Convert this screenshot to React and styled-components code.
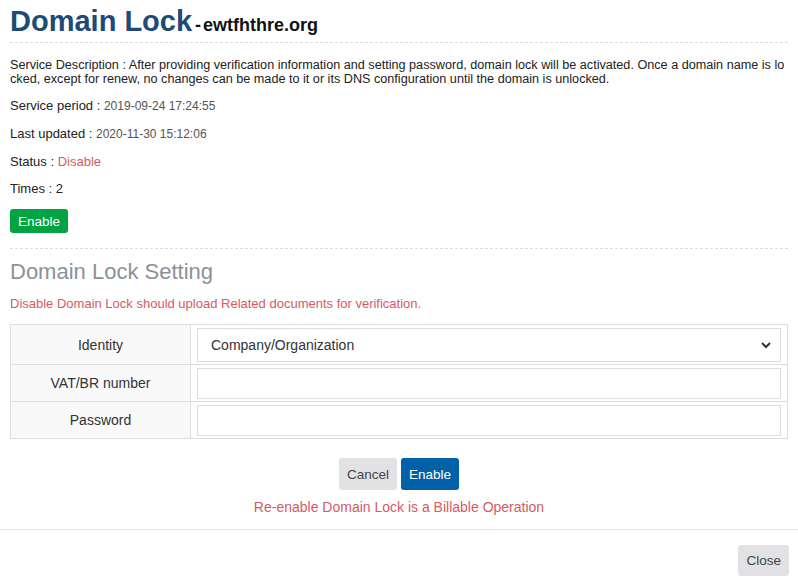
import React from 'react'
import styled, {createGlobalStyle} from 'styled-components'

const GlobalStyle = createGlobalStyle`
    html, body {
        margin: 0;
        padding: 0;
        background: #fff;
        font-family: "Liberation Sans", Arial, sans-serif;
        color: #222;
    }
`

const Modal = styled.div`
    width: 798px;
`
const Body = styled.div`
    padding: 4px 10px 0 10px;
`
const TitleRow = styled.div`
    display: flex;
    align-items: baseline;
    padding-bottom: 4px;
    border-bottom: 1px dashed #ddd;
`
const Title = styled.h1`
    margin: 0;
    font-size: 29px;
    font-weight: bold;
    color: #1b4b76;
    line-height: 34px;
`
const Domain = styled.span`
    font-size: 18px;
    font-weight: bold;
    color: #111;
    margin-left: 3px;
`
const Dash = styled.span`
    margin-right: 2px;
`
const Desc = styled.p`
    margin: 15px 0 0 0;
    font-size: 12.65px;
    line-height: 14px;
    word-break: break-all;
    color: #222;
`
const InfoLine = styled.p`
    margin: 12px 0 0 0;
    font-size: 13px;
    line-height: 15px;
    color: #222;
`
const Value = styled.span`
    color: ${p => p.red ? '#d65a62' : '#555'};
    font-size: ${p => p.red ? '13px' : '12px'};
`
const Button = styled.button`
    font-family: "Liberation Sans", Arial, sans-serif;
    font-size: 13.5px;
    border: none;
    border-radius: 3px;
    padding: 0 8px;
    height: ${p => p.h || 24}px;
    cursor: pointer;
    color: ${p => p.variant === 'gray' ? '#444' : '#fff'};
    background: ${p => p.variant === 'green' ? '#00a443' : p.variant === 'blue' ? '#0061a8' : '#e2e2e4'};
`
const FirstButton = styled.div`
    margin-top: 13px;
    padding-bottom: 15px;
    border-bottom: 1px dashed #ddd;
`
const SubTitle = styled.h2`
    margin: 10px 0 0 0;
    font-size: 22px;
    font-weight: normal;
    color: #8a9299;
    line-height: 25px;
`
const Warn = styled.p`
    margin: 12px 0 0 0;
    font-size: 13px;
    color: #d65a62;
    line-height: 15px;
`
const Table = styled.table`
    margin-top: 13px;
    width: 100%;
    border-collapse: collapse;
    border: 1px solid #ddd;
`
const Row = styled.tr`
    height: ${p => p.h}px;
`
const LabelCell = styled.td`
    width: 179px;
    background: #f9f9f9;
    border: 1px solid #ddd;
    text-align: center;
    font-size: 14px;
    color: #333;
    padding: 0;
`
const FieldCell = styled.td`
    border: 1px solid #ddd;
    padding: 2px 6px 1px 6px;
`
const SelectBox = styled.div`
    display: flex;
    align-items: center;
    justify-content: space-between;
    height: 32px;
    border: 1px solid #ddd;
    padding: 0 8px 0 13px;
    font-size: 14px;
    color: #333;
`
const Input = styled.input`
    display: block;
    width: 100%;
    box-sizing: border-box;
    height: 31px;
    border: 1px solid #ddd;
    outline: none;
`
const Actions = styled.div`
    display: flex;
    justify-content: center;
    gap: 4px;
    margin-top: 19px;
`
const Billable = styled.p`
    margin: 9px 0 0 0;
    text-align: center;
    font-size: 14px;
    color: #d65a62;
    line-height: 16px;
`
const Footer = styled.div`
    margin-top: 14px;
    border-top: 1px solid #e5e5e5;
    display: flex;
    justify-content: flex-end;
    padding: 15px 9px;
`

const Chevron = () => (
    <svg width="12" height="12" viewBox="0 0 12 12">
        <path d="M2 4 L6 8 L10 4" stroke="#333" strokeWidth="2" fill="none" />
    </svg>
)

const App = () => {
    return (
        <Modal>
            <GlobalStyle />
            <Body>
                <TitleRow>
                    <Title>Domain Lock</Title>
                    <Domain><Dash>-</Dash>ewtfhthre.org</Domain>
                </TitleRow>
                <Desc>Service Description : After providing verification information and setting password, domain lock will be activated. Once a domain name is locked, except for renew, no changes can be made to it or its DNS configuration until the domain is unlocked.</Desc>
                <InfoLine>Service period : <Value>2019-09-24 17:24:55</Value></InfoLine>
                <InfoLine>Last updated : <Value>2020-11-30 15:12:06</Value></InfoLine>
                <InfoLine>Status : <Value red>Disable</Value></InfoLine>
                <InfoLine>Times : 2</InfoLine>
                <FirstButton>
                    <Button variant="green">Enable</Button>
                </FirstButton>
                <SubTitle>Domain Lock Setting</SubTitle>
                <Warn>Disable Domain Lock should upload Related documents for verification.</Warn>
                <Table>
                    <tbody>
                        <Row h={40}>
                            <LabelCell>Identity</LabelCell>
                            <FieldCell>
                                <SelectBox>Company/Organization<Chevron /></SelectBox>
                            </FieldCell>
                        </Row>
                        <Row h={37}>
                            <LabelCell>VAT/BR number</LabelCell>
                            <FieldCell><Input type="text" /></FieldCell>
                        </Row>
                        <Row h={37}>
                            <LabelCell>Password</LabelCell>
                            <FieldCell><Input type="password" /></FieldCell>
                        </Row>
                    </tbody>
                </Table>
                <Actions>
                    <Button variant="gray" h={32}>Cancel</Button>
                    <Button variant="blue" h={32}>Enable</Button>
                </Actions>
                <Billable>Re-enable Domain Lock is a Billable Operation</Billable>
            </Body>
            <Footer>
                <Button variant="gray" h={31}>Close</Button>
            </Footer>
        </Modal>
    )
}

export default App
